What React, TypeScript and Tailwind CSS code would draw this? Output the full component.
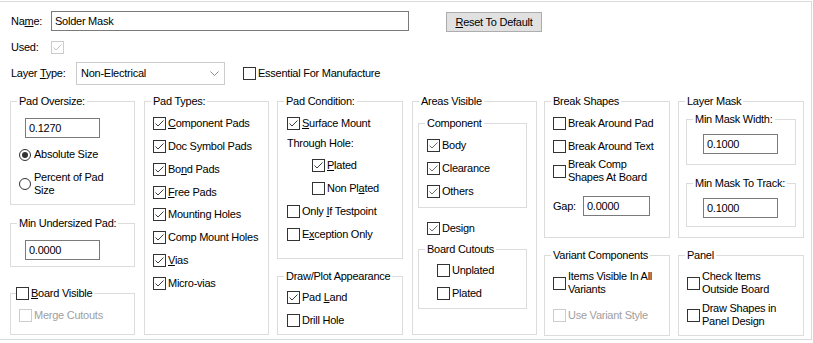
import type { ReactNode } from "react";

function Box({ checked, disabled, light }: { checked?: boolean; disabled?: boolean; light?: boolean }) {
    const border = disabled ? "border-[#cccccc]" : "border-[#333333]";
    const tick = disabled ? "#c4c4c4" : light ? "#6e6e6e" : "#3c3c3c";
    return (
        <div className={`w-[13px] h-[13px] shrink-0 border bg-white flex items-center justify-center ${border}`}>
            {checked && (
                <svg width="11" height="11" viewBox="0 0 11 11">
                    <polyline points="1.5,5.5 4,8 9.5,2.5" fill="none" stroke={tick} strokeWidth="1" />
                </svg>
            )}
        </div>
    );
}

function Check({
    checked,
    disabled,
    light,
    className,
    children,
}: {
    checked?: boolean;
    disabled?: boolean;
    light?: boolean;
    className?: string;
    children: ReactNode;
}) {
    return (
        <div className={`flex items-center ${className ?? ""}`}>
            <Box checked={checked} disabled={disabled} light={light} />
            <span className={`ml-[2px] whitespace-nowrap ${disabled ? "text-[#a0a0a0]" : ""}`}>{children}</span>
        </div>
    );
}

function Radio({ on, className, children }: { on?: boolean; className?: string; children: ReactNode }) {
    return (
        <div className={`flex items-center ${className ?? ""}`}>
            <div className="w-[12px] h-[12px] shrink-0 rounded-full border border-[#333333] bg-white flex items-center justify-center">
                {on && <div className="w-[6px] h-[6px] rounded-full bg-[#333333]" />}
            </div>
            <span className="ml-[3px] whitespace-nowrap">{children}</span>
        </div>
    );
}

function Group({ title, className, children }: { title: ReactNode; className: string; children?: ReactNode }) {
    return (
        <div className={`flex flex-col border border-[#dcdcdc] ${className}`}>
            <div className="-mt-[7px] ml-[6px] self-start bg-white px-[2px] leading-[13px] whitespace-nowrap">{title}</div>
            {children}
        </div>
    );
}

// width comes in with className
function TextBox({ value, className }: { value: string; className: string }) {
    return (
        <input
            readOnly
            value={value}
            className={`h-[20px] border border-[#7a7a7a] bg-white px-[3px] outline-none ${className}`}
        />
    );
}

export default function App() {
    return (
        <div className="w-[813px] h-[343px] bg-white text-black font-['Liberation_Sans',Arial,sans-serif] text-[11px] leading-[13px] tracking-[-0.25px]">
            <div className="mt-[1px] w-[812px] h-[339px] border-t border-r border-b border-[#dadada] flex flex-col">
                {/* name + reset */}
                <div className="mt-[9px] flex items-start">
                    <span className="ml-[11px] w-[40px] leading-[20px]">
                        Na<u>m</u>e:
                    </span>
                    <input
                        readOnly
                        value="Solder Mask"
                        className="w-[358px] h-[20px] border border-[#7a7a7a] bg-white px-[3px] outline-none"
                    />
                    <button className="ml-[37px] mt-[1px] w-[96px] h-[20px] bg-[#e1e1e1] border border-[#adadad]">
                        <u>R</u>eset To Default
                    </button>
                </div>

                <div className="mt-[9px] flex items-center h-[13px]">
                    <span className="ml-[11px] w-[40px]">Used:</span>
                    <Box checked disabled />
                </div>

                <div className="mt-[8px] flex items-center">
                    <span className="ml-[11px] w-[65px]">
                        Layer <u>T</u>ype:
                    </span>
                    <div className="w-[149px] h-[23px] border border-[#cccccc] flex items-center justify-between pl-[4px] pr-[5px]">
                        <span>Non-Electrical</span>
                        <svg width="9" height="5" viewBox="0 0 9 5">
                            <polyline points="0.5,0.5 4.5,4.5 8.5,0.5" fill="none" stroke="#8a8a8a" strokeWidth="1" />
                        </svg>
                    </div>
                    <Check className="ml-[18px]">Essential For Manufacture</Check>
                </div>

                {/* groups */}
                <div className="mt-[16px] ml-[10px] flex items-start">
                    {/* col 1 */}
                    <div className="w-[125px] flex flex-col">
                        <Group title="Pad Oversize:" className="h-[104px]">
                            <TextBox value="0.1270" className="w-[75px] mt-[10px] ml-[14px]" />
                            <Radio on className="mt-[10px] ml-[8px]">Absolute Size</Radio>
                            <Radio className="mt-[10px] ml-[8px]">
                                Percent of Pad
                                <br />
                                Size
                            </Radio>
                        </Group>
                        <Group title="Min Undersized Pad:" className="mt-[18px] h-[44px]">
                            <TextBox value="0.0000" className="w-[75px] mt-[10px] ml-[14px]" />
                        </Group>
                        <Group
                            title={
                                <div className="flex items-center -ml-[3px]">
                                    <Box />
                                    <span className="ml-[2px]">
                                        <u>B</u>oard Visible
                                    </span>
                                </div>
                            }
                            className="mt-[26px] h-[42px]"
                        >
                            <Check disabled className="mt-[9px] ml-[8px]">
                                Merge Cutouts
                            </Check>
                        </Group>
                    </div>

                    {/* col 2 */}
                    <Group title="Pad Types:" className="ml-[9px] w-[125px] h-[234px]">
                        <div className="mt-[9px] ml-[8px] flex flex-col gap-[9.85px]">
                            <Check checked>
                                <u>C</u>omponent Pads
                            </Check>
                            <Check checked>Doc Symbol Pads</Check>
                            <Check checked>
                                Bo<u>n</u>d Pads
                            </Check>
                            <Check checked>
                                <u>F</u>ree Pads
                            </Check>
                            <Check checked>Mounting Holes</Check>
                            <Check checked>Comp Mount Holes</Check>
                            <Check checked>
                                <u>V</u>ias
                            </Check>
                            <Check checked>Micro-vias</Check>
                        </div>
                    </Group>

                    {/* col 3 */}
                    <div className="ml-[8px] w-[126px] flex flex-col">
                        <Group title="Pad Condition:" className="h-[158px]">
                            <Check checked className="mt-[9px] ml-[9px]">
                                <u>S</u>urface Mount
                            </Check>
                            <span className="mt-[7px] ml-[9px]">Through Hole:</span>
                            <Check checked className="mt-[9px] ml-[34px]">
                                <u>P</u>lated
                            </Check>
                            <Check className="mt-[10px] ml-[34px]">
                                Non Pl<u>a</u>ted
                            </Check>
                            <Check className="mt-[10px] ml-[9px]">
                                Only <u>I</u>f Testpoint
                            </Check>
                            <Check className="mt-[10px] ml-[9px]">
                                E<u>x</u>ception Only
                            </Check>
                        </Group>
                        <Group title="Draw/Plot Appearance" className="mt-[17px] h-[59px]">
                            <Check checked className="mt-[8px] ml-[9px]">
                                Pad <u>L</u>and
                            </Check>
                            <Check className="mt-[10px] ml-[9px]">Drill Hole</Check>
                        </Group>
                    </div>

                    {/* col 4 */}
                    <Group title="Areas Visible" className="ml-[9px] w-[125px] h-[234px]">
                        <Group title="Component" className="mt-[15px] ml-[5px] w-[109px] h-[85px]">
                            <Check checked light className="mt-[9px] ml-[8px]">
                                Body
                            </Check>
                            <Check checked light className="mt-[10px] ml-[8px]">
                                Clearance
                            </Check>
                            <Check checked light className="mt-[10px] ml-[8px]">
                                Others
                            </Check>
                        </Group>
                        <Check checked light className="mt-[14px] ml-[14px]">
                            Design
                        </Check>
                        <Group title="Board Cutouts" className="mt-[14px] ml-[5px] w-[109px] h-[60px]">
                            <Check className="mt-[8px] ml-[18px]">Unplated</Check>
                            <Check className="mt-[10px] ml-[18px]">Plated</Check>
                        </Group>
                    </Group>

                    {/* col 5 */}
                    <div className="ml-[7px] w-[126px] flex flex-col">
                        <Group title="Break Shapes" className="h-[137px]">
                            <Check className="mt-[9px] ml-[8px]">Break Around Pad</Check>
                            <Check className="mt-[10px] ml-[8px]">Break Around Text</Check>
                            <Check className="mt-[5px] ml-[8px]">
                                Break Comp
                                <br />
                                Shapes At Board
                            </Check>
                            <div className="mt-[12px] ml-[8px] flex items-center">
                                <span className="w-[30px]">Gap:</span>
                                <TextBox value="0.0000" className="w-[67px]" />
                            </div>
                        </Group>
                        <Group title="Variant Components" className="mt-[17px] h-[81px]">
                            <Check className="mt-[8px] ml-[8px]">
                                Items Visible In All
                                <br />
                                Variants
                            </Check>
                            <Check disabled className="mt-[13px] ml-[8px]">
                                Use Variant Style
                            </Check>
                        </Group>
                    </div>

                    {/* col 6 */}
                    <div className="ml-[8px] w-[126px] flex flex-col">
                        <Group title="Layer Mask" className="h-[137px]">
                            <Group title="Min Mask Width:" className="mt-[11px] ml-[7px] w-[110px] h-[46px]">
                                <TextBox value="0.1000" className="w-[75px] mt-[8px] ml-[16px]" />
                            </Group>
                            <Group title="Min Mask To Track:" className="mt-[18px] ml-[7px] w-[110px] h-[44px]">
                                <TextBox value="0.1000" className="w-[75px] mt-[8px] ml-[16px]" />
                            </Group>
                        </Group>
                        <Group title="Panel" className="mt-[17px] h-[81px]">
                            <Check className="mt-[8px] ml-[8px]">
                                Check Items
                                <br />
                                Outside Board
                            </Check>
                            <Check className="mt-[6px] ml-[8px]">
                                Draw Shapes in
                                <br />
                                Panel Design
                            </Check>
                        </Group>
                    </div>
                </div>
            </div>
        </div>
    );
}
